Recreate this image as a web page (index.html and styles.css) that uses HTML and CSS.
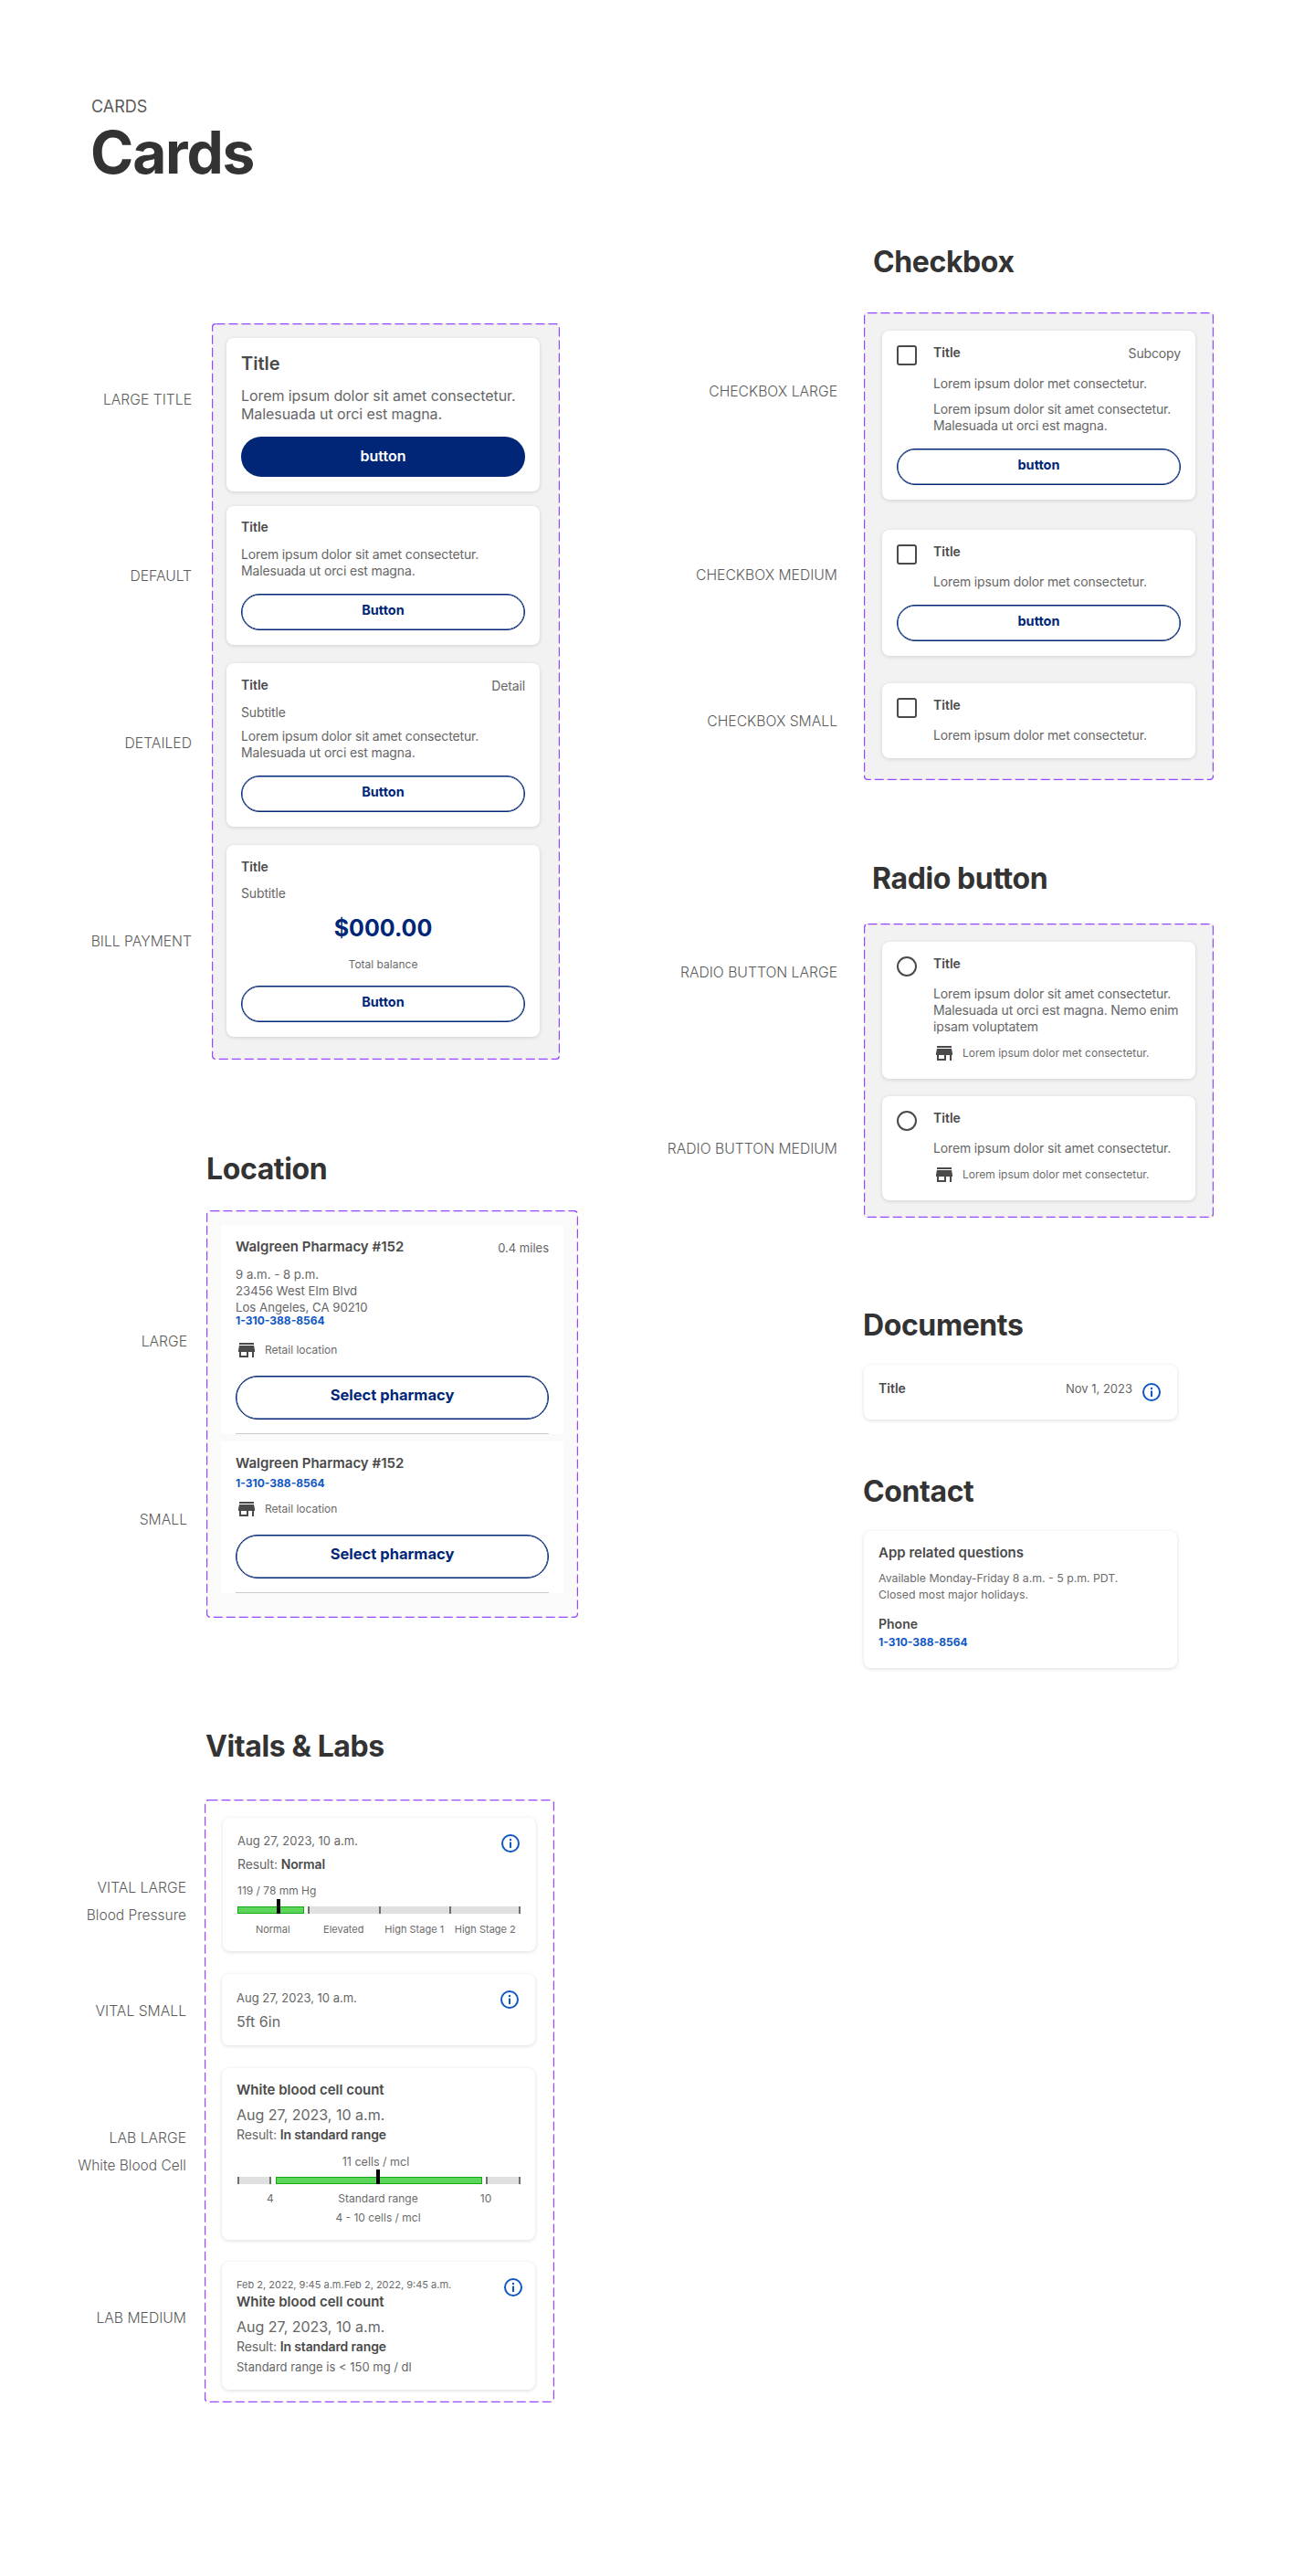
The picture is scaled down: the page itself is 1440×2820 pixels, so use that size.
FILE: index.html
```html
<!DOCTYPE html>
<html lang="en">
<head>
<meta charset="utf-8"/>
<meta content="width=device-width, initial-scale=1.0" name="viewport"/>
<title>Cards</title>
<link rel="stylesheet" href="styles.css">
</head>
<body>
<svg class="defs" width="0" height="0">
  <symbol id="store" viewBox="0 0 24 24"><path d="M20 4H4v2h16V4zm1 10v-2l-1-5H4l-1 5v2h1v6h10v-6h4v6h2v-6h1zm-9 4H6v-4h6v4z"/></symbol>
  <symbol id="info" viewBox="0 0 24 24"><circle cx="12" cy="12" r="9" fill="none" stroke="currentColor" stroke-width="2"/><circle cx="12" cy="8" r="1.2" fill="currentColor"/><rect x="11" y="10.5" width="2" height="6.5" fill="currentColor"/></symbol>
</svg>
<div class="page">
  <header class="page-head">
    <div class="eyebrow">CARDS</div>
    <h1>Cards</h1>
  </header>

  <div class="columns">
    <div class="col-left">

      <!-- generic cards -->
      <section class="demo demo-cards">
        <div class="labels">
          <div class="lbl l-large-title">LARGE TITLE</div>
          <div class="lbl l-default">DEFAULT</div>
          <div class="lbl l-detailed">DETAILED</div>
          <div class="lbl l-bill">BILL PAYMENT</div>
        </div>
        <div class="panel grey">
          <svg class="dash"><rect/></svg>
          <div class="card">
            <div class="title-lg">Title</div>
            <p class="body-lg mt-13">Lorem ipsum dolor sit amet consectetur.<br>Malesuada ut orci est magna.</p>
            <div class="btn btn-fill mt-15">button</div>
          </div>
          <div class="card mt-16 pt-14">
            <div class="title">Title</div>
            <p class="body mt-12">Lorem ipsum dolor sit amet consectetur.<br>Malesuada ut orci est magna.</p>
            <div class="btn mt-16">Button</div>
          </div>
          <div class="card mt-20 pt-15">
            <div class="row">
              <div class="title">Title</div>
              <div class="body detail">Detail</div>
            </div>
            <div class="body mt-11">Subtitle</div>
            <p class="body mt-8">Lorem ipsum dolor sit amet consectetur.<br>Malesuada ut orci est magna.</p>
            <div class="btn mt-16">Button</div>
          </div>
          <div class="card mt-20 pt-15">
            <div class="title">Title</div>
            <div class="body mt-11">Subtitle</div>
            <div class="amount mt-11">$000.00</div>
            <div class="small center mt-14">Total balance</div>
            <div class="btn mt-15">Button</div>
          </div>
        </div>
      </section>

      <!-- location -->
      <section class="block-location">
        <h2 class="h-location">Location</h2>
        <div class="demo demo-location">
          <div class="labels">
            <div class="lbl l-loc-large">LARGE</div>
            <div class="lbl l-loc-small">SMALL</div>
          </div>
          <div class="panel pale">
            <svg class="dash"><rect/></svg>
            <div class="place">
              <div class="row">
                <div class="title title-md">Walgreen Pharmacy #152</div>
                <div class="body-sm detail">0.4 miles</div>
              </div>
              <p class="body-sm addr mt-11">9 a.m. - 8 p.m.<br>23456 West Elm Blvd<br>Los Angeles, CA 90210</p>
              <div class="phone phone-tight">1-310-388-8564</div>
              <div class="meta mt-11"><svg class="ic"><use href="#store"/></svg><span class="small">Retail location</span></div>
              <div class="btn btn-lg mt-16">Select pharmacy</div>
            </div>
            <div class="place mt-8">
              <div class="title title-md">Walgreen Pharmacy #152</div>
              <div class="phone mt-4">1-310-388-8564</div>
              <div class="meta mt-7"><svg class="ic"><use href="#store"/></svg><span class="small">Retail location</span></div>
              <div class="btn btn-lg mt-16">Select pharmacy</div>
            </div>
          </div>
        </div>
      </section>

      <!-- vitals and labs -->
      <section class="block-vitals">
        <h2>Vitals &amp; Labs</h2>
        <div class="demo demo-vitals">
          <div class="labels">
            <div class="lbl l-vital-large">VITAL LARGE</div>
            <div class="lbl l-sub">Blood Pressure</div>
            <div class="lbl l-vital-small">VITAL SMALL</div>
            <div class="lbl l-lab-large">LAB LARGE</div>
            <div class="lbl l-sub">White Blood Cell</div>
            <div class="lbl l-lab-medium">LAB MEDIUM</div>
          </div>
          <div class="panel plain">
            <svg class="dash"><rect/></svg>
            <div class="card card-shift pt-16">
              <div class="row head">
                <div class="body-sm">Aug 27, 2023, 10 a.m.</div>
                <svg class="ic info"><use href="#info"/></svg>
              </div>
              <div class="body mt-8">Result: <b>Normal</b></div>
              <div class="small mt-12">119 / 78 mm Hg</div>
              <div class="bar bar-vital mt-9">
                <span class="seg ok"></span>
                <span class="seg tick"></span>
                <span class="seg tick"></span>
                <span class="seg tick end"></span>
                <i class="marker marker-vital"></i>
              </div>
              <div class="bar-labels small small-xs mt-9">
                <span>Normal</span><span>Elevated</span><span>High Stage 1</span><span>High Stage 2</span>
              </div>
            </div>
            <div class="card gap-25 pt-17">
              <div class="row head">
                <div class="body-sm">Aug 27, 2023, 10 a.m.</div>
                <svg class="ic info up"><use href="#info"/></svg>
              </div>
              <div class="value mt-7">5ft 6in</div>
            </div>
            <div class="card gap-25 pt-15">
              <div class="title title-md">White blood cell count</div>
              <div class="value mt-8">Aug 27, 2023, 10 a.m.</div>
              <div class="body mt-3">Result: <b>In standard range</b></div>
              <div class="small center lab-value mt-13">11 cells / mcl</div>
              <div class="bar bar-lab mt-8">
                <span class="seg tick lo"></span>
                <span class="seg ok mid"></span>
                <span class="seg tick hi end"></span>
                <i class="marker marker-lab"></i>
              </div>
              <div class="lab-labels small mt-8">
                <span>4</span><span>Standard range</span><span>10</span>
              </div>
              <div class="small center lab-range mt-5">4 - 10 cells / mcl</div>
            </div>
            <div class="card gap-24 pt-17">
              <div class="row head head-sm">
                <div class="small small-xs">Feb 2, 2022, 9:45 a.m.Feb 2, 2022, 9:45 a.m.</div>
                <svg class="ic info up out"><use href="#info"/></svg>
              </div>
              <div class="title title-md mt-2">White blood cell count</div>
              <div class="value mt-8">Aug 27, 2023, 10 a.m.</div>
              <div class="body mt-3">Result: <b>In standard range</b></div>
              <div class="body-sm mt-4">Standard range is &lt; 150 mg / dl</div>
            </div>
          </div>
        </div>
      </section>
    </div>

    <div class="col-right">

      <!-- checkbox -->
      <section class="block-checkbox">
        <h2 class="h-check">Checkbox</h2>
        <div class="demo demo-check">
          <div class="labels">
            <div class="lbl l-check-large">CHECKBOX LARGE</div>
            <div class="lbl l-check-medium">CHECKBOX MEDIUM</div>
            <div class="lbl l-check-small">CHECKBOX SMALL</div>
          </div>
          <div class="panel grey">
            <svg class="dash"><rect/></svg>
            <div class="card pt-15">
              <div class="pick">
                <span class="box"></span>
                <div class="pick-text">
                  <div class="row">
                    <div class="title">Title</div>
                    <div class="body detail">Subcopy</div>
                  </div>
                  <div class="body mt-15">Lorem ipsum dolor met consectetur.</div>
                  <p class="body mt-10">Lorem ipsum dolor sit amet consectetur.<br>Malesuada ut orci est magna.</p>
                </div>
              </div>
              <div class="btn mt-16">button</div>
            </div>
            <div class="card gap-33 pt-15">
              <div class="pick">
                <span class="box"></span>
                <div class="pick-text">
                  <div class="title">Title</div>
                  <div class="body mt-15">Lorem ipsum dolor met consectetur.</div>
                </div>
              </div>
              <div class="btn mt-16">button</div>
            </div>
            <div class="card gap-30 pt-15">
              <div class="pick">
                <span class="box"></span>
                <div class="pick-text">
                  <div class="title">Title</div>
                  <div class="body mt-15">Lorem ipsum dolor met consectetur.</div>
                </div>
              </div>
            </div>
          </div>
        </div>
      </section>

      <!-- radio -->
      <section class="block-radio">
        <h2 class="h-radio">Radio button</h2>
        <div class="demo demo-radio">
          <div class="labels">
            <div class="lbl l-radio-large">RADIO BUTTON LARGE</div>
            <div class="lbl l-radio-medium">RADIO BUTTON MEDIUM</div>
          </div>
          <div class="panel grey">
            <svg class="dash"><rect/></svg>
            <div class="card pt-15">
              <div class="pick">
                <span class="box radio"></span>
                <div class="pick-text">
                  <div class="title">Title</div>
                  <p class="body mt-15">Lorem ipsum dolor sit amet consectetur.<br>Malesuada ut orci est magna. Nemo enim<br>ipsam voluptatem</p>
                  <div class="meta mt-8"><svg class="ic"><use href="#store"/></svg><span class="small">Lorem ipsum dolor met consectetur.</span></div>
                </div>
              </div>
            </div>
            <div class="card gap-19 pt-15">
              <div class="pick">
                <span class="box radio"></span>
                <div class="pick-text">
                  <div class="title">Title</div>
                  <p class="body mt-15">Lorem ipsum dolor sit amet consectetur.</p>
                  <div class="meta mt-8"><svg class="ic"><use href="#store"/></svg><span class="small">Lorem ipsum dolor met consectetur.</span></div>
                </div>
              </div>
            </div>
          </div>
        </div>
      </section>

      <!-- documents -->
      <section class="block-docs">
        <h2>Documents</h2>
        <div class="card doc pt-17">
          <div class="title">Title</div>
          <div class="body-sm doc-date">Nov 1, 2023</div>
          <svg class="ic info"><use href="#info"/></svg>
        </div>
      </section>

      <!-- contact -->
      <section class="block-contact">
        <h2>Contact</h2>
        <div class="card contact pt-15">
          <div class="title title-md">App related questions</div>
          <p class="body-xs mt-10">Available Monday-Friday 8 a.m. - 5 p.m. PDT.<br>Closed most major holidays.</p>
          <div class="title mt-14">Phone</div>
          <div class="phone mt-2">1-310-388-8564</div>
        </div>
      </section>
    </div>
  </div>
</div>
</body>
</html>
```

FILE: styles.css
```css
* { box-sizing: border-box; }
html, body { margin: 0; padding: 0; background: #fff; }
body { font-family: Inter, "Liberation Sans", sans-serif; color: #666; }
p { margin: 0; white-space: nowrap; }
.defs { position: absolute; }
.page { width: 1440px; height: 2820px; overflow: hidden; }

/* page header */
.page-head { padding: 106px 0 0 100px; height: 200px; }
.eyebrow { font-size: 18px; line-height: 22px; color: #5a5a5a; }
h1 { margin: 7px 0 0 -1px; font-size: 64px; line-height: 64px; font-weight: 700; letter-spacing: -1.2px; color: #333; }
h2 { margin: 0; font-size: 32px; line-height: 36px; font-weight: 700; letter-spacing: -0.4px; color: #333; }

.columns { display: flex; }
.col-left { width: 700px; padding-top: 154px; }
.col-right { width: 740px; padding-top: 69px; }

/* label column + dashed panel */
.demo { display: flex; align-items: flex-start; }
.labels { flex: none; text-align: right; }
.lbl { font-size: 15.7px; line-height: 20px; font-weight: 300; color: #5c5c5c; white-space: nowrap; }
.panel { position: relative; flex: none; }
.grey { background: #f2f2f2; }
.pale { background: #fafafa; }
.plain { background: #fff; }
.dash { position: absolute; left: 0; top: 0; width: 100%; height: 100%; pointer-events: none; }
.dash rect { x: .5px; y: .5px; width: calc(100% - 1px); height: calc(100% - 1px); rx: 4px; fill: none; stroke: #9747ff; stroke-width: 1.4; stroke-dasharray: 10 4; }

.demo-cards .labels { width: 210px; margin-right: 22px; }
.demo-cards .panel { width: 381px; height: 806px; padding: 16px 0 0 16px; }
.l-large-title { margin-top: 74px; }
.l-default { margin-top: 173px; }
.l-detailed { margin-top: 163px; }
.l-bill { margin-top: 197px; }

.block-location { margin-top: 102px; }
.h-location { margin-left: 226px; }
.demo-location { margin-top: 27px; }
.demo-location .labels { width: 205px; margin-right: 21px; }
.demo-location .panel { width: 407px; height: 446px; padding: 16px 0 0 16px; }
.l-loc-large { margin-top: 134px; }
.l-loc-small { margin-top: 175px; }

.block-vitals { margin-top: 123px; }
.block-vitals h2 { margin-left: 225px; }
.demo-vitals { margin-top: 40px; }
.demo-vitals .labels { width: 204px; margin-right: 20px; }
.demo-vitals .panel { width: 383px; height: 660px; padding: 20px 0 0 19px; }
.l-vital-large { margin-top: 87px; }
.l-sub { margin-top: 10px; font-size: 15.5px; }
.l-vital-small { margin-top: 85px; }
.l-lab-large { margin-top: 119px; }
.l-lab-medium { margin-top: 147px; }

.h-check { margin-left: 256px; }
.demo-check { margin-top: 37px; }
.demo-check .labels, .demo-radio .labels { width: 217px; margin-right: 29px; }
.demo-check .panel { width: 383px; height: 512px; padding: 20px 0 0 20px; }
.l-check-large { margin-top: 77px; }
.l-check-medium { margin-top: 181px; }
.l-check-small { margin-top: 140px; }

.block-radio { margin-top: 90px; }
.h-radio { margin-left: 255px; }
.demo-radio { margin-top: 31px; }
.demo-radio .panel { width: 383px; height: 322px; padding: 20px 0 0 20px; }
.l-radio-large { margin-top: 44px; }
.l-radio-medium { margin-top: 173px; }

.block-docs { margin-top: 100px; margin-left: 245px; }
.block-contact { margin-top: 61px; margin-left: 245px; }
.block-docs .card, .block-contact .card { margin-top: 25px; margin-left: 1px; }

/* cards */
.card { position: relative; width: 343px; padding: 16px; background: #fff; border-radius: 8px; box-shadow: 0 1px 4px rgba(0, 0, 0, .14); }
.card-shift { margin-left: 1px; }
.gap-19 { margin-top: 19px; }
.gap-24 { margin-top: 24px; }
.gap-25 { margin-top: 25px; }
.gap-30 { margin-top: 30px; }
.gap-33 { margin-top: 33px; }
.pt-14 { padding-top: 14px; }
.pt-15 { padding-top: 15px; }
.pt-16 { padding-top: 16px; }
.pt-17 { padding-top: 17px; }
.mt-2 { margin-top: 2px; }
.mt-3 { margin-top: 3px; }
.mt-4 { margin-top: 4px; }
.mt-5 { margin-top: 5px; }
.mt-7 { margin-top: 7px; }
.mt-8 { margin-top: 8px; }
.mt-9 { margin-top: 9px; }
.mt-10 { margin-top: 10px; }
.mt-11 { margin-top: 11px; }
.mt-12 { margin-top: 12px; }
.mt-13 { margin-top: 13px; }
.mt-14 { margin-top: 14px; }
.mt-15 { margin-top: 15px; }
.mt-16 { margin-top: 16px; }
.mt-20 { margin-top: 20px; }

.title-lg { font-size: 20px; line-height: 24px; font-weight: 600; color: #4a4a4a; }
.title { font-size: 14px; line-height: 18px; font-weight: 600; color: #4a4a4a; }
.title-md { font-size: 15px; }
.body-lg { font-size: 16px; line-height: 20px; letter-spacing: -.08px; }
.body { font-size: 14px; line-height: 18px; letter-spacing: -.14px; }
.body b { font-weight: 600; color: #4a4a4a; }
.body-sm { font-size: 13px; line-height: 18px; }
.addr { font-size: 13.2px; }
.body-xs { font-size: 12.3px; line-height: 18px; color: #6b6b6b; }
.small { font-size: 12px; line-height: 16px; color: #6b6b6b; }
.small-xs { font-size: 11px; }
.value { font-size: 16px; line-height: 20px; }
.center { text-align: center; }
.amount { font-size: 25px; line-height: 36px; font-weight: 700; text-align: center; color: #012677; }
.phone { font-size: 12px; line-height: 18px; font-weight: 700; color: #0f57c2; }
.phone-tight { margin-top: -3px; }
.row { display: flex; justify-content: space-between; align-items: flex-start; }
.detail { margin-top: 1px; }
.head { height: 18px; }
.head-sm { height: 16px; }

.btn { height: 40px; border: 1px solid #012677; border-radius: 20px; box-shadow: inset 0 0 0 .5px #012677; font-size: 14.5px; line-height: 34px; font-weight: 700; text-align: center; color: #012677; }
.btn-fill { height: 44px; border: 0; border-radius: 22px; box-shadow: none; background: #012677; color: #fff; font-size: 16px; line-height: 43px; font-weight: 600; }
.btn-lg { height: 48px; border-radius: 24px; font-size: 16.5px; line-height: 41px; }

/* location rows */
.place { width: 375px; padding: 15px 16px 0; background: #fff; }
.place::after { content: ""; display: block; height: 1px; margin-top: 15px; background: #ccc; }

.meta { display: flex; align-items: center; gap: 8px; height: 24px; }
.ic { flex: none; width: 24px; height: 24px; fill: #4a4a4a; }
.info { color: #0f57c2; }
.up { margin-top: -1px; }
.out { margin-right: -4px; }

/* result bars */
.bar { position: relative; display: flex; width: 310px; height: 8px; margin-left: 1px; }
.bar-vital { margin-left: 0; }
.seg { display: block; height: 8px; background: #e0e0e0; }
.ok { background: #5bd65b; border: 1px solid #14a814; }
.tick { border-left: 2px solid #6e6e6e; }
.tick.end { border-right: 2px solid #6e6e6e; }
.bar-vital .seg { width: 77.5px; }
.bar-vital .ok { width: 73px; margin-right: 4px; }
.bar-lab .lo { width: 37px; border-right: 2px solid #6e6e6e; margin-right: 5px; }
.bar-lab .mid { width: 226px; margin-right: 4px; }
.bar-lab .hi { width: 38px; }
.marker { position: absolute; top: -8px; width: 4px; height: 16px; background: #000; }
.marker-vital { left: 42.5px; }
.marker-lab { left: 152px; }
.bar-labels { display: grid; grid-template-columns: repeat(4, 77.5px); text-align: center; }
.lab-labels { display: grid; grid-template-columns: 72px 164px 72px; margin-left: 1px; text-align: center; }
.lab-value { width: 305px; font-size: 12.5px; }
.lab-range { width: 310px; }

/* checkbox and radio */
.pick { display: flex; gap: 18px; }
.pick-text { flex: 1; min-width: 0; }
.box { flex: none; width: 22px; height: 22px; margin-top: 1px; border: 2px solid #4a4a4a; border-radius: 3px; }
.radio { border-radius: 50%; }

/* documents and contact */
.doc { display: flex; align-items: flex-start; height: 60px; }
.doc .title { flex: 1; }
.doc-date { margin-right: 9px; }
.doc .info { margin-top: 1px; }
.contact { height: 150px; }
```
